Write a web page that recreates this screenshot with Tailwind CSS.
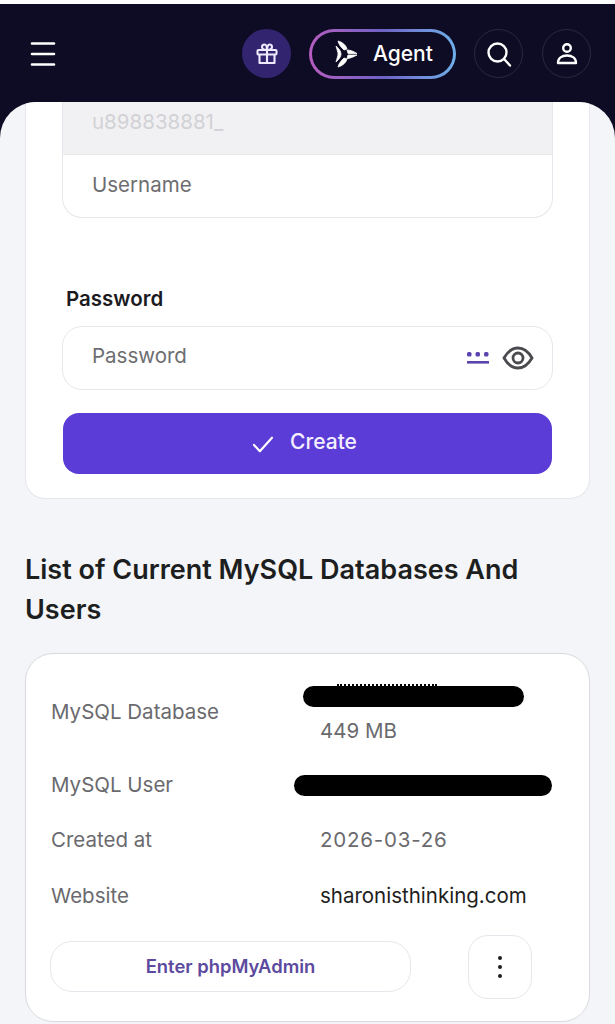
<!DOCTYPE html>
<html lang="en">
<head>
  <meta charset="UTF-8" />
  <meta name="viewport" content="width=device-width, initial-scale=1" />
  <title>MySQL Databases</title>
  <script src="https://cdn.jsdelivr.net/npm/@tailwindcss/browser@4"></script>
</head>
<body class="bg-[#f4f5f8] font-['Inter',sans-serif] text-[#1d1e20]">
<div class="w-[615px] h-[1024px] overflow-hidden flex flex-col bg-white">

  <!-- Top bar -->
  <div class="mt-[4px] h-[98px] shrink-0 bg-[#0e0b24] flex items-center pl-[30px] pr-[24px] pt-[1px]">
    <svg width="26" height="26" viewBox="0 0 26 26" fill="none" stroke="#fff" stroke-width="2.6" stroke-linecap="round">
      <path d="M2 2.500h22M2 13h22M2 23.500h22"/>
    </svg>
    <div class="ml-auto flex items-center">
      <div class="w-[49px] h-[49px] rounded-full bg-[#33246f] flex items-center justify-center">
        <svg width="24" height="24" viewBox="0 0 24 24" fill="none" stroke="#efe9ff" stroke-width="2.1" stroke-linejoin="round">
          <rect x="2.500" y="8" width="19" height="4.500" rx="1"/>
          <path d="M4.500 12.500V21h15v-8.500M12 8v13M12 8C10 8 7 7.500 7 5c0-1.500 1.200-2.500 2.500-2.500C11 2.500 12 5 12 8c0-3 1-5.500 2.500-5.500C15.800 2.500 17 3.500 17 5c0 2.500-3 3-5 3"/>
        </svg>
      </div>
      <div class="ml-[18px] w-[147px] h-[50px] rounded-full p-[3px] bg-linear-to-r from-[#b65cc0] via-[#6d62c4] to-[#6fb0ea]">
        <div class="w-full h-full rounded-full bg-[#0e0b24] flex items-center pl-[23px] gap-[15px]">
          <svg width="23" height="28" viewBox="7 4 23 28" fill="#fff" stroke="#fff" stroke-width="0.8" stroke-linejoin="round">
            <path d="M10 5C14 6 18 9 19 13L16 14C13 11 11 9 10 5Z"/>
            <path d="M8 10C11 13 13 15 13 18C13 21 11 23 8 26C9 22 10 20 10 18C10 16 9 14 8 10Z"/>
            <path d="M10 31C11 27 13 25 16 22L19 23C18 27 14 30 10 31Z"/>
            <path d="M19 14C22 14 25 15 29 17.500L20 17.500Z"/>
            <path d="M19 22.500C22 22.500 25 21 29 19L20 19Z"/>
          </svg>
          <span class="text-[21px] leading-none font-medium text-white">Agent</span>
        </div>
      </div>
      <div class="ml-[18px] w-[49px] h-[49px] rounded-full border border-[#2b2840] flex items-center justify-center">
        <svg width="28" height="28" viewBox="0 0 28 28" fill="none" stroke="#fff" stroke-width="2.400" stroke-linecap="round">
          <circle cx="12.500" cy="12.500" r="9"/><path d="M19.500 19.500 25 25.500"/>
        </svg>
      </div>
      <div class="ml-[19px] w-[49px] h-[49px] rounded-full border border-[#2b2840] flex items-center justify-center">
        <svg width="22" height="23" viewBox="0 0 22 23" fill="none" stroke="#fff" stroke-width="2.400" stroke-linejoin="round">
          <circle cx="11" cy="6" r="3.800"/><path d="M2 21c0-5 4-7.500 9-7.500s9 2.500 9 7.500Z"/>
        </svg>
      </div>
    </div>
  </div>

  <!-- Sheet under the bar -->
  <div class="flex-1 bg-[#0e0b24]">
    <div class="h-full bg-[#f4f5f8] rounded-t-[36px] overflow-hidden px-[25px]">

      <!-- Create form card -->
      <div class="bg-white border border-t-0 border-[#e6e7ec] rounded-b-[20px] h-[397px] px-[36px]">
        <div class="border border-t-0 border-[#e6e7ec] rounded-b-[20px] h-[116px] overflow-hidden">
          <div class="h-[53px] bg-[#f1f1f3] border-b border-[#e9e9ec] pl-[29px] text-[20.500px] leading-[40px] text-[#d2d2d6]">u898838881_</div>
          <div class="pl-[29px] pt-[16px] text-[20.500px] leading-[28px] text-[#6d6d70]">Username</div>
        </div>

        <label class="block mt-[67px] ml-[4px] text-[20.500px] leading-[28px] font-semibold text-[#1b1b1f]">Password</label>
        <div class="mt-[13px] h-[64px] border border-[#e6e7ec] rounded-[20px] flex items-center pl-[29px] pr-[18px]">
          <span class="pb-[3px] text-[20.500px] text-[#6d6d70]">Password</span>
          <svg class="ml-auto" width="24" height="16" viewBox="0 0 24 16" fill="#5b45ad">
            <rect x="1" y="2" width="4.500" height="4.500" rx="1.500"/><rect x="9.500" y="2" width="4.500" height="4.500" rx="1.500"/><rect x="18" y="2" width="4.500" height="4.500" rx="1.500"/>
            <rect x="1" y="11" width="22" height="2.600"/>
          </svg>
          <svg class="ml-[12px]" width="32" height="24" viewBox="0 0 32 24" fill="none" stroke="#4b4b4f" stroke-width="2.800">
            <path d="M2 12C6 5 10.500 2 16 2s10 3 14 10c-4 7-8.500 10-14 10S6 19 2 12Z"/><circle cx="16" cy="12" r="5"/>
          </svg>
        </div>
        <button class="mt-[23px] ml-[1px] w-[489px] h-[61px] rounded-[16px] bg-[#5b3cd6] flex items-center justify-center gap-[16px] pb-[3px] pr-[6px] text-[21px] font-medium text-[#f3efff]">
          <svg class="mt-[3px]" width="22" height="18" viewBox="0 0 24 20" fill="none" stroke="#fff" stroke-width="2.400" stroke-linecap="round" stroke-linejoin="round">
            <path d="M2 11l6.500 7L22 3"/>
          </svg>
          Create
        </button>
      </div>

      <h2 class="mt-[51px] text-[27px] leading-[40px] font-semibold text-[#1d1e20]">List of Current MySQL Databases And Users</h2>

      <!-- Database card -->
      <div class="mt-[23px] bg-white border border-[#d9dade] rounded-[28px] h-[369px] pl-[25px] pr-[37px] pt-[30px]">
        <div class="grid grid-cols-[269px_1fr] items-center text-[20.500px] text-[#6a6a6e]">
          <div class="leading-[28px] pb-[10px]">MySQL Database</div>
          <div class="h-[66px]">
            <div class="ml-[17px] w-[100px] h-[2px] border-t-2 border-dotted border-black"></div>
            <div class="-ml-[17px] w-[221px] h-[21px] rounded-full bg-black"></div>
            <div class="mt-[10px] leading-[28px]">449 MB</div>
          </div>
          <div class="mt-[21px] leading-[28px]">MySQL User</div>
          <div class="mt-[21px] -ml-[26px] w-[258px] h-[21px] rounded-full bg-black"></div>
          <div class="mt-[27px] leading-[28px]">Created at</div>
          <div class="mt-[27px] leading-[28px] tracking-[0.8px]">2026-03-26</div>
          <div class="mt-[28px] leading-[28px]">Website</div>
          <div class="mt-[28px] leading-[28px] text-[#1d1e20]">sharonisthinking.com</div>
        </div>
        <div class="mt-[24px] -ml-[1px] flex items-center">
          <button class="w-[361px] h-[51px] border border-[#e6e7ec] rounded-[22px] text-[18.400px] font-semibold text-[#5c4a9e]">Enter phpMyAdmin</button>
          <button class="mt-[1px] ml-[57px] w-[64px] h-[64px] border border-[#e6e7ec] rounded-[20px] flex items-center justify-center">
            <svg width="6" height="24" viewBox="0 0 6 24" fill="#1d1e20"><circle cx="3" cy="3" r="2"/><circle cx="3" cy="12" r="2"/><circle cx="3" cy="21" r="2"/></svg>
          </button>
        </div>
      </div>
    </div>
  </div>
</div>
</body>
</html>
